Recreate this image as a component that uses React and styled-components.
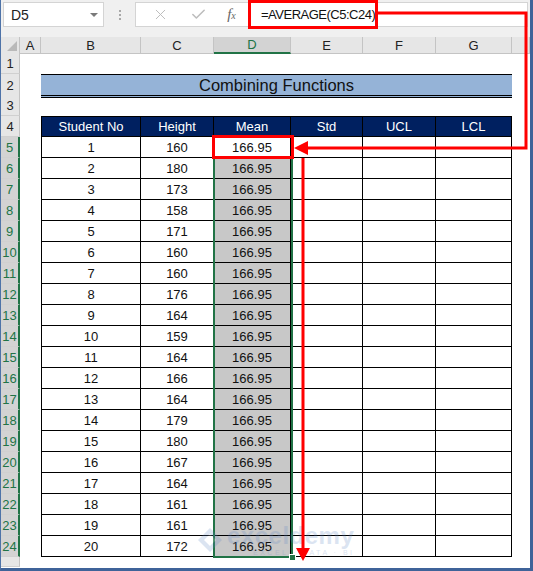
import styled, { createGlobalStyle } from 'styled-components';
import { X, Check } from 'lucide-react';

const GlobalStyle = createGlobalStyle`
  html, body {
    margin: 0;
    padding: 0;
    background: #ffffff;
  }
`;

const COLS = '19px 21px 100px 73px 77px 72px 73px 76px 1fr';
const GREEN = '#217346';

const Frame = styled.div`
  position: relative;
  width: 533px;
  height: 571px;
  box-sizing: border-box;
  border-left: 1px solid #4e73a8;
  border-right: 3px solid #3f6399;
  border-bottom: 3px solid #3f6399;
  background: #ffffff;
  overflow: hidden;
  font-family: 'Liberation Sans', Arial, sans-serif;
  display: flex;
  flex-direction: column;
`;

const FormulaBar = styled.div`
  display: flex;
  height: 37px;
  box-sizing: border-box;
  padding: 2px 2px 10px 2px;
  background: #f0f0f0;
`;

const NameBox = styled.div`
  width: 101px;
  box-sizing: border-box;
  background: #fff;
  border: 1px solid #d4d4d4;
  display: flex;
  align-items: center;
  justify-content: space-between;
  padding: 0 5px 0 7px;
  font-size: 14px;
  color: #222;
`;

const DropArrow = styled.span`
  width: 0;
  height: 0;
  border-left: 4px solid transparent;
  border-right: 4px solid transparent;
  border-top: 4px solid #7a7a7a;
`;

const Dots = styled.div`
  width: 31px;
  display: flex;
  flex-direction: column;
  align-items: center;
  justify-content: center;
  gap: 2px;

  span {
    width: 2px;
    height: 2px;
    background: #a8a8a8;
  }
`;

const ButtonsBox = styled.div`
  width: 113px;
  box-sizing: border-box;
  background: #fff;
  border: 1px solid #d4d4d4;
  border-right: none;
  display: flex;
  align-items: center;
  justify-content: space-around;
  padding: 0 2px 0 6px;
  color: #bdbdbd;
`;

const Fx = styled.span`
  font-family: 'Liberation Serif', 'Times New Roman', serif;
  font-style: italic;
  font-size: 15px;
  color: #666;

  sub {
    font-size: 10px;
    vertical-align: 0;
  }
`;

const FormulaInput = styled.div`
  flex: 1;
  background: #fff;
  border: 1px solid #d4d4d4;
  display: flex;
  align-items: center;
  padding-left: 12px;
  font-size: 13px;
  letter-spacing: -0.5px;
  color: #111;
`;

const Row = styled.div`
  display: grid;
  grid-template-columns: ${COLS};
  height: ${(p) => p.$h || 21}px;
  flex-shrink: 0;
`;

const ColHead = styled.div`
  background: ${(p) => (p.$sel ? '#d3d3d3' : '#e6e6e6')};
  border-right: 1px solid #c4c4c4;
  border-bottom: ${(p) => (p.$sel ? `2px solid ${GREEN}` : '1px solid #c4c4c4')};
  display: flex;
  align-items: center;
  justify-content: center;
  font-size: 13px;
  color: ${(p) => (p.$sel ? GREEN : '#222')};
  box-sizing: border-box;
`;

const Corner = styled.div`
  background: #e6e6e6;
  border-right: 1px solid #c4c4c4;
  border-bottom: 1px solid #c4c4c4;
  display: flex;
  align-items: flex-end;
  justify-content: flex-end;
  padding: 0 2px 2px 0;
  box-sizing: border-box;

  &::after {
    content: '';
    width: 0;
    height: 0;
    border-left: 10px solid transparent;
    border-bottom: 10px solid #b9b9b9;
  }
`;

const RowHead = styled.div`
  background: ${(p) => (p.$sel ? '#d3d3d3' : '#e6e6e6')};
  border-right: ${(p) => (p.$sel ? `2px solid ${GREEN}` : '1px solid #c4c4c4')};
  border-bottom: 1px solid #d0d0d0;
  display: flex;
  align-items: center;
  justify-content: center;
  font-size: 13px;
  color: ${(p) => (p.$sel ? GREEN : '#222')};
  box-sizing: border-box;
`;

const Blank = styled.div`
  background: #fff;
`;

const Title = styled.div`
  grid-column: 3 / 9;
  background: #95b3d7;
  border-top: 1px solid #000;
  border-bottom: 3px double #000;
  display: flex;
  align-items: center;
  justify-content: center;
  font-size: 16.5px;
  color: #111;
  box-sizing: border-box;
  padding-top: 1px;
`;

const Cell = styled.div`
  display: flex;
  align-items: center;
  justify-content: center;
  box-sizing: border-box;
  border-right: 1px solid #000;
  border-bottom: 1px solid #000;
  border-left: ${(p) => (p.$first ? '1px solid #000' : 'none')};
  background: ${(p) => p.$bg || '#fff'};
  font-size: 13px;
  color: #111;
`;

const HeadCell = styled(Cell)`
  background: #002060;
  color: #fff;
  border-top: 1px solid #000;
  font-size: 13px;
`;

const Selection = styled.div`
  position: absolute;
  left: 212px;
  top: 136px;
  width: 80px;
  height: 422px;
  box-sizing: border-box;
  border: 2px solid ${GREEN};
  pointer-events: none;

  &::after {
    content: '';
    position: absolute;
    right: -5px;
    bottom: -5px;
    width: 5px;
    height: 5px;
    background: ${GREEN};
    border: 1px solid #fff;
  }
`;

const Watermark = styled.div`
  position: absolute;
  left: 196px;
  top: 524px;
  display: flex;
  align-items: center;
  gap: 4px;
  opacity: 0.22;
  pointer-events: none;
`;

const MarkText = styled.div`
  display: flex;
  flex-direction: column;
  line-height: 1;

  b {
    font-size: 24px;
    font-weight: 700;
    color: #5f86c4;
    letter-spacing: 0.5px;
  }

  small {
    font-size: 7px;
    color: #5f86c4;
    letter-spacing: 2.5px;
    margin-left: 26px;
    margin-top: 1px;
  }
`;

const Annotations = styled.svg`
  position: absolute;
  left: 0;
  top: 0;
  pointer-events: none;
`;

const heights = [160, 180, 173, 158, 171, 160, 160, 176, 164, 159, 164, 166, 164, 179, 180, 167, 164, 161, 161, 172];
const letters = ['A', 'B', 'C', 'D', 'E', 'F', 'G', ''];

export default function App() {
  return (
    <Frame>
      <GlobalStyle />
      <FormulaBar>
        <NameBox>
          D5
          <DropArrow />
        </NameBox>
        <Dots>
          <span />
          <span />
          <span />
        </Dots>
        <ButtonsBox>
          <X size={17} strokeWidth={1.4} />
          <Check size={17} strokeWidth={2.2} />
          <Fx>
            f<sub>x</sub>
          </Fx>
        </ButtonsBox>
        <FormulaInput>=AVERAGE(C5:C24)</FormulaInput>
      </FormulaBar>

      <Row $h={16}>
        <Corner />
        {letters.map((l, i) => (
          <ColHead key={i} $sel={l === 'D'}>
            {l}
          </ColHead>
        ))}
      </Row>

      <Row>
        <RowHead>1</RowHead>
      </Row>
      <Row>
        <RowHead>2</RowHead>
        <Blank />
        <Title>Combining Functions</Title>
      </Row>
      <Row>
        <RowHead>3</RowHead>
      </Row>
      <Row>
        <RowHead>4</RowHead>
        <Blank />
        <HeadCell $first>Student No</HeadCell>
        <HeadCell>Height</HeadCell>
        <HeadCell>Mean</HeadCell>
        <HeadCell>Std</HeadCell>
        <HeadCell>UCL</HeadCell>
        <HeadCell>LCL</HeadCell>
      </Row>
      {heights.map((h, i) => (
        <Row key={i}>
          <RowHead $sel>{i + 5}</RowHead>
          <Blank />
          <Cell $first>{i + 1}</Cell>
          <Cell>{h}</Cell>
          <Cell $bg={i === 0 ? '#fff' : '#c8c8c8'}>166.95</Cell>
          <Cell />
          <Cell />
          <Cell />
        </Row>
      ))}
      <Row $h={10}>
        <RowHead />
      </Row>

      <Selection />

      <Watermark>
        <svg width="26" height="26" viewBox="0 0 26 26">
          <path d="M13 1 L25 13 L13 25 L1 13 Z" fill="#5f86c4" />
          <path d="M13 7 L19 13 L13 19 L7 13 Z" fill="#fff" />
        </svg>
        <MarkText>
          <b>exceldemy</b>
          <small>EXCEL · DATA · BI</small>
        </MarkText>
      </Watermark>

      <Annotations width="533" height="571" viewBox="0 0 533 571">
        <g fill="none" stroke="#ff0000" strokeWidth="3">
          <rect x="248.5" y="1.5" width="127" height="26" />
          <rect x="212.5" y="136.5" width="79" height="21" />
          <polyline points="377,13 525,13 525,148 304,148" />
          <line x1="302" y1="158" x2="302" y2="550" />
        </g>
        <polygon points="293,148 307,141 307,155" fill="#ff0000" />
        <polygon points="302,561 295,548 309,548" fill="#ff0000" />
      </Annotations>
    </Frame>
  );
}
